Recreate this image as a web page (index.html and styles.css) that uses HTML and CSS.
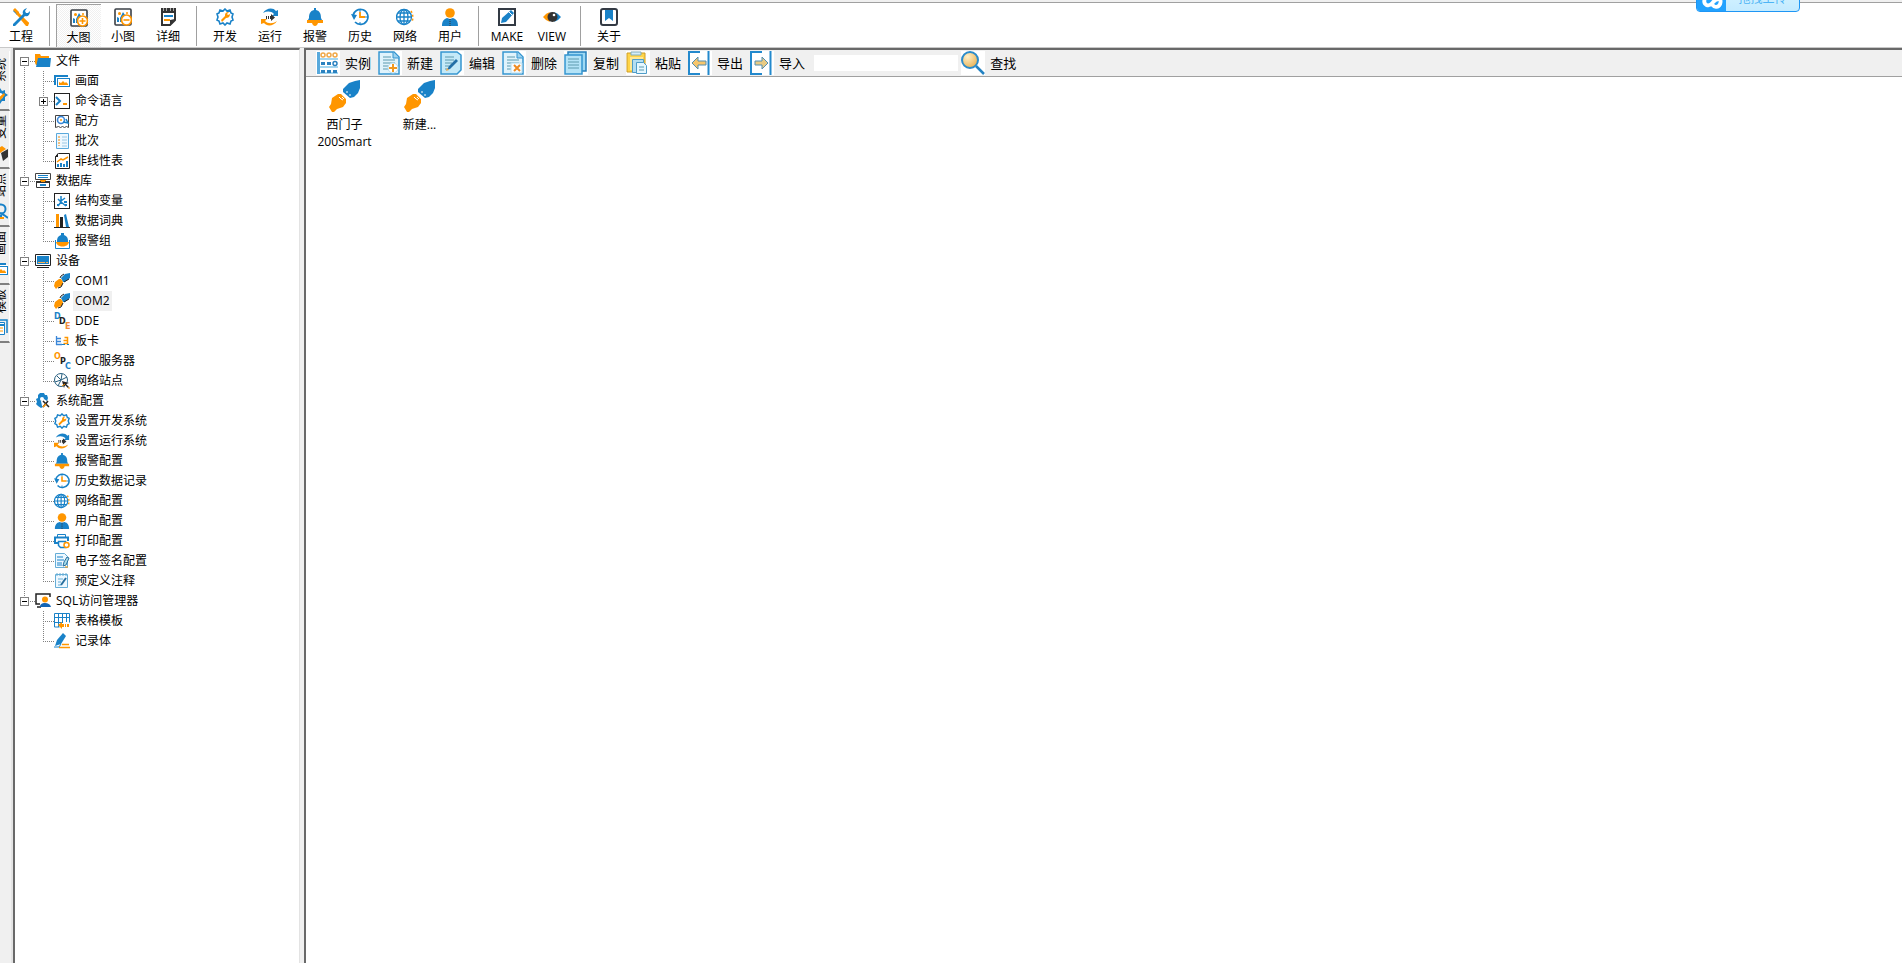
FILE: index.html
```html
<!DOCTYPE html>
<html lang="zh-CN">
<head>
    <meta charset="UTF-8">
    <meta name="viewport" content="width=device-width, initial-scale=1.0">
    <title>工程浏览器</title>
    <link rel="stylesheet" href="styles.css">
</head>
<body>
    <svg class="sprite" aria-hidden="true">
        <!-- shared by the top toolbar and the tree -->
        <symbol id="i-tools" viewBox="0 0 18 18">
            <path d="M3 1l4 4-2 2-4-4z" fill="#1982c8"/><path d="M5 5l11 11" stroke="#ff9600" stroke-width="3"/>
            <path d="M1 2l2-2 4 4v2L5 6z" fill="#ff9600"/><path d="M11 10l6 5-1 3h-2l-5-6z" fill="#ff9600"/>
            <path d="M1 16L11 6c-1-3 1-5 4-6l-2 3 1 2 2 0 2-2c0 4-2 6-5 5L3 18H1z" fill="#1982c8"/>
        </symbol>
        <symbol id="i-zoom" viewBox="0 0 18 18">
            <rect x="1" y="1" width="16" height="16" rx="1" fill="#fff" stroke="#3a3f45" stroke-width="1.6"/>
            <circle cx="5.500" cy="5.500" r="1.500" fill="#ff9600"/><path d="M3 14V9l2 1v4zm3 0v-4l3-6 2 3-2 7z" fill="#1982c8"/><circle cx="13" cy="5" r="1" fill="#ff9600"/>
            <circle cx="12.500" cy="12" r="5" fill="#fff" stroke="#ff9600" stroke-width="1.700"/>
        </symbol>
        <symbol id="i-note" viewBox="0 0 18 18">
            <path d="M3 1h13v11l-5 5H3z" fill="#fff" stroke="#333" stroke-width="2"/><path d="M2 1h15v4H2z" fill="#333"/>
            <path d="M4.500 0v3m3-3v3m4-3v3m3-3v3" stroke="#aaa"/><path d="M5 8h9" stroke="#1982c8" stroke-width="2"/><path d="M5 12h6" stroke="#ff9600" stroke-width="2"/><path d="M16 11l-5 6v-5z" fill="#333"/>
        </symbol>
        <symbol id="i-gear" viewBox="0 0 18 18">
            <path d="M9 1l2 2 3-1 1 3 2 1-1 3 1 3-2 1-1 3-3-1-2 2-2-2-3 1-1-3-2-1 1-3-1-3 2-1 1-3 3 1z" fill="#fff" stroke="#1982c8" stroke-width="1.600"/>
            <path d="M5 12l4-4c0-3 1-4 4-4l-2 2 1 1 2-1c0 3-2 4-4 4l-4 4z" fill="#ff9600"/>
        </symbol>
        <symbol id="i-run" viewBox="0 0 18 18">
            <path d="M2 5C5 0 12-1 15 3l2-1v6h-6l2-2C10 3 6 3 2 5z" fill="#1982c8"/>
            <path d="M16 13C13 18 6 19 3 15l-3 1 0-5h6l-2 2c3 3 8 3 12 0z" fill="#ff9600"/>
            <path d="M5 8h1v3H5zm2 0h1v3H7zm2 0h1V6l4 3.500-4 3.500v-2H9z" fill="#333"/>
        </symbol>
        <symbol id="i-bell" viewBox="0 0 18 18">
            <path d="M8 0h2v2c4 1 5 4 5 8l1 2H2l1-2c0-4 1-7 5-8z" fill="#1982c8"/><path d="M1 12h16v3h-5c-1 4-5 4-6 0H1z" fill="#ff9600"/>
        </symbol>
        <symbol id="i-history" viewBox="0 0 18 18">
            <path d="M2 8a7.500 7.500 0 1 1 2 6" fill="none" stroke="#1982c8" stroke-width="1.700"/><path d="M0 6l6 1-3 5z" fill="#1982c8"/>
            <path d="M9 1v3m0 10v3m5-8h3" stroke="#1982c8"/><path d="M9 4v5h5" fill="none" stroke="#ff9600" stroke-width="1.800"/>
        </symbol>
        <symbol id="i-globe" viewBox="0 0 18 18">
            <g fill="none" stroke="#1982c8" stroke-width="1.300"><circle cx="8" cy="9" r="7.500"/><ellipse cx="8" cy="9" rx="4" ry="7.500"/><path d="M8 1v16M1 9h15M2 5h12M2 13h12"/></g>
            <path d="M15 3q3 5 1 11" fill="none" stroke="#ff9600" stroke-width="1.500" stroke-dasharray="2 2"/>
        </symbol>
        <symbol id="i-user" viewBox="0 0 18 18">
            <circle cx="9" cy="5" r="4.800" fill="#ff9600"/><path d="M1 18c0-5 2-7 5-8l3 1 3-1c3 1 5 3 5 8z" fill="#1982c8"/><path d="M9 11v7" stroke="#333" stroke-dasharray="1 1"/>
        </symbol>
        <symbol id="i-make" viewBox="0 0 18 18">
            <rect x="1" y="1" width="16" height="16" fill="#fff" stroke="#333a44" stroke-width="2"/><path d="M3 15l1-5 9-8 3 3-8 9z" fill="#1982c8"/><path d="M11 4l3 3" stroke="#fff"/>
        </symbol>
        <symbol id="i-view" viewBox="0 0 18 18">
            <path d="M7 4Q3 5 0 9q3 4 7 5l-2-5z" fill="#ff9600"/><path d="M11 4q4 1 7 5-3 4-7 5l3-5z" fill="#1982c8"/>
            <circle cx="9.500" cy="9" r="5" fill="#333"/><circle cx="11" cy="7" r="1.300" fill="#fff"/>
        </symbol>
        <symbol id="i-about" viewBox="0 0 18 18">
            <rect x="1" y="1" width="16" height="16" rx="2" fill="#fff" stroke="#333a44" stroke-width="2"/><path d="M5 2h8v11l-4-3-4 3z" fill="#1982c8"/>
        </symbol>

        <!-- tree only -->
        <symbol id="t-folder" viewBox="0 0 16 16"><path d="M0 1h5l1 2h8v3H3v6H1L0 10z" fill="#ff9600"/><path d="M3 5h13l-1 9H1z" fill="#1982c8"/></symbol>
        <symbol id="t-picture" viewBox="0 0 16 16"><path d="M0 2h14v3H2v7H0z" fill="#1982c8"/><path d="M2 4h14v10H2z" fill="#fff"/><rect x="3.500" y="5.500" width="12" height="8" fill="#fff" stroke="#1982c8"/><path d="M5 12V9l2 1 2-2 2 2 1-1 2 2v1z" fill="#ff9600"/></symbol>
        <symbol id="t-cmd" viewBox="0 0 16 16"><rect x=".5" y=".5" width="15" height="15" fill="#fff" stroke="#222"/><path d="M2 4l4 4-4 4" fill="none" stroke="#1982c8" stroke-width="2"/><path d="M9 11h4" stroke="#ff9600" stroke-width="2"/></symbol>
        <symbol id="t-recipe" viewBox="0 0 16 16"><path d="M1.500 14.500v-12h13v12l-2-1-2 1-2-1-2 1-2-1z" fill="#fff" stroke="#444"/><circle cx="7" cy="7" r="3.500" fill="none" stroke="#3a86d8" stroke-width="1.600"/><path d="M9 9l5 1-2-4" fill="none" stroke="#1982c8" stroke-width="1.500"/><circle cx="7" cy="7" r="1" fill="#ff9600"/></symbol>
        <symbol id="t-batch" viewBox="0 0 16 16"><path d="M2.500.5h12v15h-12z" fill="#eef8ff" stroke="#5aa9dc"/><path d="M5 3v10" stroke="#f0c080" stroke-width="2" stroke-dasharray="2 1"/><path d="M8 4h5M8 7h5M8 10h5M8 13h5" stroke="#9cc8e4"/></symbol>
        <symbol id="t-chart" viewBox="0 0 16 16"><path d="M1.500 3.500l3-3h11v15h-14z" fill="#fff" stroke="#222"/><path d="M1 4l3-4v4z" fill="#222"/><path d="M3 9l4-3 2 1 5-3" fill="none" stroke="#ff9600" stroke-width="1.500"/><path d="M4 14v-3m3 3v-4m3 4v-3m3 3V8" stroke="#1982c8" stroke-width="2"/></symbol>
        <symbol id="t-db" viewBox="0 0 16 16"><path d="M.5.500h15v6H.5z" fill="#fff" stroke="#444"/><path d="M3 2.500h10M3 4.500h10" stroke="#1982c8"/><path d="M5 7h6v2H5z" fill="#ff9600"/><path d="M1.500 9.500h13v5h-13z" fill="#fff" stroke="#333"/><path d="M1 9h5m4 0h5" stroke="#333" stroke-width="2"/><path d="M5 12h6" stroke="#1982c8" stroke-width="2"/></symbol>
        <symbol id="t-struct" viewBox="0 0 16 16"><rect x=".5" y=".5" width="15" height="15" fill="#fff" stroke="#222"/><path d="M7 3v6l-3 4m3-4l5 4M7 8l4-3M4 6l3 3" fill="none" stroke="#1982c8" stroke-width="1.500"/><path d="M10 9h3M3 12h2m6 0h2" stroke="#1982c8" stroke-width="2"/></symbol>
        <symbol id="t-books" viewBox="0 0 16 16"><path d="M2 1h3v13H2z" fill="#ff9600"/><path d="M6 4h3v10H6z" fill="#222"/><path d="M10 2l2-1 3 13h-3z" fill="#1982c8"/><path d="M0 14.500h16" stroke="#222"/></symbol>
        <symbol id="t-bellgroup" viewBox="0 0 16 16"><path d="M1.500 7V15.500h14V7" fill="none" stroke="#1982c8"/><path d="M7 0h3v2c3 1 4 3 4 6v1H3V8c0-3 1-5 4-6z" fill="#1982c8"/><path d="M2 9h13c-1 6-12 6-13 0z" fill="#ff9600"/></symbol>
        <symbol id="t-device" viewBox="0 0 16 16"><path d="M.5 1.500h15v11H.5z" fill="#fff" stroke="#222"/><path d="M2 3h12v8H2z" fill="#1982c8"/><path d="M3 9.500h7m1 0h2" stroke="#ffb050"/><path d="M2 14.500h12" stroke="#222"/></symbol>
        <symbol id="t-plug" viewBox="0 0 32 32"><path d="M14 9l6-6 6-2 5-1v8l-2 5-4 4-4 1-7-6z" fill="#1982c8"/><path d="M3 18l6-4h3l5 5v4l-3 4-6 2-3 3H3l-3-5 2-3z" fill="#ff9600"/><path d="M10 17l2 2m1-2l2 2m-3 0l2 1" stroke="#fff"/><path d="M18 11v2m3 1v2" stroke="#fff"/></symbol>
        <symbol id="t-plugs" viewBox="0 0 16 16"><path d="M7 5l4-4 5-1v5l-5 4-2 0z" fill="#1982c8"/><path d="M0 13l1-4 4-3h2l2 3-1 4-4 1-2 2z" fill="#ff9600"/><path d="M6 5l1-2 3-2M10 9l5-3M9 10l-2 4-3 1" fill="none" stroke="#222"/></symbol>
        <symbol id="t-card" viewBox="0 0 16 16"><path d="M2.500 3v9M3 5.500h4M3 8.500h4m-5 3h6" stroke="#3a86d8" stroke-width="1.300"/><path d="M10.500 4.500h3v3h-4m0 3h4v-3" fill="none" stroke="#ff9600" stroke-width="1.500"/><path d="M8 11.500h3m2 0h2" stroke="#1982c8"/></symbol>
        <symbol id="t-site" viewBox="0 0 16 16"><g fill="none" stroke="#286080"><circle cx="7" cy="7" r="6.500"/><path d="M1 9l6-2 1-6M3 3l4 4 6-3M7 7l-3 6"/></g><path d="M8 8l7 2-3 1 3 3-1 1-3-3-1 3z" fill="#222"/><path d="M8 13l3-2m3 4h2" stroke="#ff9600"/></symbol>
        <symbol id="t-system" viewBox="0 0 16 16"><path d="M5 0h4l1 2h2l1 3-1 3-3-2-3 2 1 5 1 1-2 1-3-2-2-2 1-2-1-3 2-1 0-3z" fill="#1982c8"/><circle cx="7" cy="6" r="2" fill="#fff"/><path d="M8 8l6 6M13 8l-5 6" stroke="#222" stroke-width="1.500"/><path d="M8 14l3-3" stroke="#ff9600" stroke-width="1.500"/></symbol>
        <symbol id="t-print" viewBox="0 0 16 16"><path d="M3.500 1.500h8v3h-8z" fill="#fff" stroke="#1982c8"/><path d="M1 8V4.500h13V8M1 8v2h3" fill="none" stroke="#1982c8" stroke-width="2"/><path d="M4.500 8.500h7v6h-5l-2-2z" fill="#fff" stroke="#1982c8" stroke-width="1.500"/><circle cx="12.500" cy="12" r="2.500" fill="#fff" stroke="#ff9600" stroke-width="1.500"/></symbol>
        <symbol id="t-sign" viewBox="0 0 16 16"><path d="M1.500.5h9l3 3v11h-12z" fill="#eef8ff" stroke="#65add6"/><path d="M3 4h6M3 7h7M3 10h5M3 12h5" stroke="#1982c8"/><path d="M9 13l1-4 3-5 2 1-3 7z" fill="#aaddea" stroke="#286f9e"/><path d="M11 14h3" stroke="#ff9600"/></symbol>
        <symbol id="t-memo" viewBox="0 0 16 16"><path d="M1.500 1.500h12v13h-12z" fill="#eef8ff" stroke="#65add6"/><path d="M3 0v3m3-3v3m3-3v3m3-3v3" stroke="#65add6"/><path d="M4 6h5M4 9h3M4 12h3" stroke="#65add6"/><path d="M7 12l5-7" stroke="#286f9e" stroke-width="2"/></symbol>
        <symbol id="t-sql" viewBox="0 0 16 16"><path d="M5 11H1V1h14v3" fill="none" stroke="#222" stroke-width="1.500"/><path d="M2 14h4" stroke="#222" stroke-width="1.500"/><circle cx="10" cy="6.500" r="3" fill="#ff9600"/><path d="M5 14c0-3 2-4 5-4s5 1 6 4z" fill="#1464b4"/></symbol>
        <symbol id="t-table" viewBox="0 0 16 16"><path d="M.5 9.500v-9h15v9M.5 9v5h5M0 4.500h16M0 9.500h9M4.500 1v13M8.500 1v9M12.500 1v8" fill="none" stroke="#1982c8"/><path d="M4 12l4-3v2h2v3H8v2zm7-1h1v3h-1zm2 0h2v3h-2z" fill="#ff9600"/></symbol>
        <symbol id="t-record" viewBox="0 0 16 16"><path d="M1 13l2-6 6-7 3 3-5 8z" fill="#1982c8"/><path d="M0 14h5l2-3" fill="none" stroke="#1982c8"/><path d="M8 11.500h7M5 14.500h11" stroke="#ff9600" stroke-width="1.500"/></symbol>

        <!-- panel toolbar -->
        <symbol id="p-case" viewBox="0 0 24 24"><path d="M1 1h3v22H1z" fill="#58a9dc"/><path d="M4 8h18M4 16h18M4 22h18" stroke="#a4d6f0" stroke-width="2"/><g fill="none" stroke="#f0a848" stroke-width="1.500"><circle cx="7" cy="4" r="2"/><circle cx="13" cy="4" r="2"/><circle cx="19" cy="4" r="2"/></g><path d="M5 11h4v3H5zm6 0h4v3h-4zM5 19h4v3H5zm6 0h4v3h-4zm6 0h4v3h-4z" fill="#2b82c0"/><circle cx="19" cy="12.500" r="2" fill="none" stroke="#2b82c0" stroke-width="1.500"/></symbol>
        <symbol id="p-doc" viewBox="0 0 24 24"><path d="M1 1h15l5 5v17H1z" fill="#e0f3fc" stroke="#3595d0" stroke-width="1.500"/><path d="M15 1v6h6" fill="#9ed3ef" stroke="#3595d0"/><path d="M5 6h8M5 9h12M5 12h12M5 15h8M5 18h6" stroke="#5c9aae"/></symbol>
        <symbol id="p-new" viewBox="0 0 24 24"><use href="#p-doc"/><circle cx="15" cy="17" r="5" fill="#fff" stroke="#b8dced"/><path d="M15 13v8m-4-4h8" stroke="#f09820" stroke-width="2"/></symbol>
        <symbol id="p-edit" viewBox="0 0 24 24"><path d="M1 1h16l4 3v15l-4 4H1z" fill="#c4e9f8" stroke="#3595d0" stroke-width="1.500"/><path d="M5 6h9M5 9h9M5 12h7M5 15h4M5 18h3" stroke="#5c9aae"/><path d="M7 19l2-4 7-7 2 2-8 8z" fill="#246fa6"/><path d="M6 20l1-3 2 2z" fill="#f0a848"/></symbol>
        <symbol id="p-delete" viewBox="0 0 24 24"><use href="#p-doc"/><path d="M9 12h11v10H9z" fill="#f7fcff" stroke="#b8dced"/><path d="M12 14l6 6m0-6l-6 6" stroke="#f08a20" stroke-width="2"/></symbol>
        <symbol id="p-copy" viewBox="0 0 24 24"><path d="M4 1h18v19H4z" fill="#9ed9f4" stroke="#277fba" stroke-width="1.500"/><path d="M1 4h17v19H1z" fill="#b4e3f7" stroke="#3595d0" stroke-width="1.500"/><path d="M4 8h11M4 11h11M4 14h11M4 17h11" stroke="#5c9aae"/></symbol>
        <symbol id="p-paste" viewBox="0 0 24 24"><path d="M1 2h18v19H1z" fill="#ffd447" stroke="#ce9e29"/><path d="M5 1h10v3H5z" fill="#d4edf8" stroke="#82aebb"/><path d="M4 6h13v13H4z" fill="#ffe893"/><path d="M6.500 8.500h11v13h-11z" fill="#b4def2" stroke="#509dc8"/><path d="M10.500 11.500h7l3 3v8h-10z" fill="#e5f7ff" stroke="#509dc8"/><path d="M13 16h5m-5 3h5" stroke="#5c9aae"/></symbol>
        <symbol id="p-export" viewBox="0 0 24 24"><path d="M12 1H1v22h11M20.500 0v24" fill="none" stroke="#2389cd" stroke-width="2"/><path d="M4 12l6-6v4h8v4h-8v4z" fill="#f7c66c" stroke="#538eb0"/></symbol>
        <symbol id="p-import" viewBox="0 0 24 24"><path d="M12 1H1v22h11M20.500 0v24" fill="none" stroke="#2389cd" stroke-width="2"/><path d="M18 12l-6-6v4H5v4h7v4z" fill="#e8cb84" stroke="#538eb0"/></symbol>
        <symbol id="p-find" viewBox="0 0 24 24"><radialGradient id="lens" cx=".35" cy=".3" r=".7"><stop stop-color="#fff0c8"/><stop offset="1" stop-color="#e8b55c"/></radialGradient><path d="M15 15l8 8" stroke="#2382c2" stroke-width="2.500"/><circle cx="9" cy="9" r="8" fill="url(#lens)" stroke="#2b8ccb" stroke-width="2"/></symbol>
    </svg>

    <header class="toolbar">
        <button class="tool tool-first"><svg><use href="#i-tools"/></svg>工程</button>
        <span class="sep"></span>
        <button class="tool active"><svg viewBox="0 0 18 18"><use href="#i-zoom"/><path d="M9.500 12h6m-3-3v6" stroke="#ff9600" stroke-width="1.600"/></svg>大图</button>
        <button class="tool"><svg viewBox="0 0 18 18"><use href="#i-zoom"/><path d="M9.500 12h6" stroke="#ff9600" stroke-width="1.600"/></svg>小图</button>
        <button class="tool"><svg><use href="#i-note"/></svg>详细</button>
        <span class="sep"></span>
        <button class="tool"><svg><use href="#i-gear"/></svg>开发</button>
        <button class="tool"><svg><use href="#i-run"/></svg>运行</button>
        <button class="tool"><svg><use href="#i-bell"/></svg>报警</button>
        <button class="tool"><svg><use href="#i-history"/></svg>历史</button>
        <button class="tool"><svg><use href="#i-globe"/></svg>网络</button>
        <button class="tool"><svg><use href="#i-user"/></svg>用户</button>
        <span class="sep"></span>
        <button class="tool"><svg><use href="#i-make"/></svg>MAKE</button>
        <button class="tool"><svg><use href="#i-view"/></svg>VIEW</button>
        <span class="sep"></span>
        <button class="tool"><svg><use href="#i-about"/></svg>关于</button>
    </header>

    <div class="workspace">
        <nav class="tabs">
            <button class="tab current"><span>系统</span><svg viewBox="0 0 16 16"><path d="M8 0l2 3 3-1 0 3 3 2-3 2 0 4-3 0-2 3-2-3-3 0 0-4-3-2 3-2 0-3 3 1z" fill="#1982c8"/><circle cx="8" cy="8" r="3" fill="#fff"/><path d="M5 11l7-6 1 2-6 7z" fill="#ff9600"/></svg></button>
            <button class="tab"><span>变量</span><svg viewBox="0 0 16 16"><path d="M3 5l7-4 4 3-6 4z" fill="#ff9600"/><path d="M9 8l7-4v8l-5 4z" fill="#333"/></svg></button>
            <button class="tab"><span>站点</span><svg viewBox="0 0 16 16"><circle cx="9" cy="6" r="4.500" fill="none" stroke="#1982c8" stroke-width="2"/><path d="M8 10l4 2 4 3M4 13h6" stroke="#1982c8" stroke-width="2"/><path d="M8 15h4" stroke="#ff9600" stroke-width="2"/></svg></button>
            <button class="tab"><span>画面</span><svg><use href="#t-picture"/></svg></button>
            <button class="tab"><span>模板</span><svg viewBox="0 0 16 16"><path d="M4 1h11v13" fill="none" stroke="#1982c8" stroke-width="1.500"/><path d="M1.500 3.500h11v12h-11z" fill="#fff" stroke="#1982c8"/><path d="M2 6h10" stroke="#1982c8" stroke-width="2"/><path d="M4 9h7m-7 3h7" stroke="#ff9600"/></svg></button>
        </nav>

        <aside class="tree">
            <ul>
                <li class="group">
                    <div class="row"><i class="guide root start"><button class="toggle" aria-label="折叠"></button></i><svg><use href="#t-folder"/></svg><span>文件</span></div>
                    <ul>
                        <li class="row"><i class="guide trunk"></i><i class="guide branch"></i><svg><use href="#t-picture"/></svg><span>画面</span></li>
                        <li class="row"><i class="guide trunk"></i><i class="guide branch"><button class="toggle closed" aria-label="展开"></button></i><svg><use href="#t-cmd"/></svg><span>命令语言</span></li>
                        <li class="row"><i class="guide trunk"></i><i class="guide branch"></i><svg><use href="#t-recipe"/></svg><span>配方</span></li>
                        <li class="row"><i class="guide trunk"></i><i class="guide branch"></i><svg><use href="#t-batch"/></svg><span>批次</span></li>
                        <li class="row"><i class="guide trunk"></i><i class="guide branch"></i><svg><use href="#t-chart"/></svg><span>非线性表</span></li>
                    </ul>
                </li>
                <li class="group">
                    <div class="row"><i class="guide root"><button class="toggle" aria-label="折叠"></button></i><svg><use href="#t-db"/></svg><span>数据库</span></div>
                    <ul>
                        <li class="row"><i class="guide trunk"></i><i class="guide branch"></i><svg><use href="#t-struct"/></svg><span>结构变量</span></li>
                        <li class="row"><i class="guide trunk"></i><i class="guide branch"></i><svg><use href="#t-books"/></svg><span>数据词典</span></li>
                        <li class="row"><i class="guide trunk"></i><i class="guide branch"></i><svg><use href="#t-bellgroup"/></svg><span>报警组</span></li>
                    </ul>
                </li>
                <li class="group">
                    <div class="row"><i class="guide root"><button class="toggle" aria-label="折叠"></button></i><svg><use href="#t-device"/></svg><span>设备</span></div>
                    <ul>
                        <li class="row"><i class="guide trunk"></i><i class="guide branch"></i><svg><use href="#t-plugs"/></svg><span>COM1</span></li>
                        <li class="row"><i class="guide trunk"></i><i class="guide branch"></i><svg><use href="#t-plugs"/></svg><span class="selected">COM2</span></li>
                        <li class="row"><i class="guide trunk"></i><i class="guide branch"></i><svg class="letters" viewBox="0 0 16 16"><text x="0" y="6" fill="#1982c8">D</text><text x="5" y="11" fill="#222">D</text><text x="11" y="16" fill="#f08c3c">E</text></svg><span>DDE</span></li>
                        <li class="row"><i class="guide trunk"></i><i class="guide branch"></i><svg><use href="#t-card"/></svg><span>板卡</span></li>
                        <li class="row"><i class="guide trunk"></i><i class="guide branch"></i><svg class="letters" viewBox="0 0 16 16"><text x="0" y="6" fill="#ff9600">O</text><text x="6" y="11" fill="#222">P</text><text x="11" y="16" fill="#1982c8">C</text></svg><span>OPC服务器</span></li>
                        <li class="row"><i class="guide trunk"></i><i class="guide branch"></i><svg><use href="#t-site"/></svg><span>网络站点</span></li>
                    </ul>
                </li>
                <li class="group">
                    <div class="row"><i class="guide root"><button class="toggle" aria-label="折叠"></button></i><svg><use href="#t-system"/></svg><span>系统配置</span></div>
                    <ul>
                        <li class="row"><i class="guide trunk"></i><i class="guide branch"></i><svg><use href="#i-gear"/></svg><span>设置开发系统</span></li>
                        <li class="row"><i class="guide trunk"></i><i class="guide branch"></i><svg><use href="#i-run"/></svg><span>设置运行系统</span></li>
                        <li class="row"><i class="guide trunk"></i><i class="guide branch"></i><svg><use href="#i-bell"/></svg><span>报警配置</span></li>
                        <li class="row"><i class="guide trunk"></i><i class="guide branch"></i><svg><use href="#i-history"/></svg><span>历史数据记录</span></li>
                        <li class="row"><i class="guide trunk"></i><i class="guide branch"></i><svg><use href="#i-globe"/></svg><span>网络配置</span></li>
                        <li class="row"><i class="guide trunk"></i><i class="guide branch"></i><svg><use href="#i-user"/></svg><span>用户配置</span></li>
                        <li class="row"><i class="guide trunk"></i><i class="guide branch"></i><svg><use href="#t-print"/></svg><span>打印配置</span></li>
                        <li class="row"><i class="guide trunk"></i><i class="guide branch"></i><svg><use href="#t-sign"/></svg><span>电子签名配置</span></li>
                        <li class="row"><i class="guide trunk"></i><i class="guide branch"></i><svg><use href="#t-memo"/></svg><span>预定义注释</span></li>
                    </ul>
                </li>
                <li class="group">
                    <div class="row"><i class="guide root end"><button class="toggle" aria-label="折叠"></button></i><svg><use href="#t-sql"/></svg><span>SQL访问管理器</span></div>
                    <ul>
                        <li class="row"><i class="guide"></i><i class="guide branch"></i><svg><use href="#t-table"/></svg><span>表格模板</span></li>
                        <li class="row"><i class="guide"></i><i class="guide branch"></i><svg><use href="#t-record"/></svg><span>记录体</span></li>
                    </ul>
                </li>
            </ul>
        </aside>

        <main class="panel">
            <div class="actions">
                <button class="action"><svg><use href="#p-case"/></svg>实例</button>
                <button class="action"><svg><use href="#p-new"/></svg>新建</button>
                <button class="action"><svg><use href="#p-edit"/></svg>编辑</button>
                <button class="action"><svg><use href="#p-delete"/></svg>删除</button>
                <button class="action"><svg><use href="#p-copy"/></svg>复制</button>
                <button class="action"><svg><use href="#p-paste"/></svg>粘贴</button>
                <button class="action"><svg><use href="#p-export"/></svg>导出</button>
                <button class="action"><svg><use href="#p-import"/></svg>导入</button>
                <input class="search" type="text" aria-label="查找">
                <button class="action"><svg><use href="#p-find"/></svg>查找</button>
            </div>
            <div class="devices">
                <a class="device" href="#"><svg><use href="#t-plug"/></svg>西门子<br>200Smart</a>
                <a class="device" href="#"><svg><use href="#t-plug"/></svg>新建...</a>
            </div>
        </main>
    </div>

    <button class="upload">
        <svg viewBox="0 0 30 24"><path d="M20 12c-2-4-8-4-12 0-2 6 4 9 8 4s10-6 8 1c-2 4-6 4-8 1" fill="none" stroke="#fff" stroke-width="4"/></svg>
        <span>拖拽上传</span>
    </button>
</body>
</html>
```
FILE: styles.css
```css
* {
    box-sizing: border-box;
}

body {
    margin: 0;
    height: 100vh;
    display: flex;
    flex-direction: column;
    overflow: hidden;
    background: #f0f0f0;
    color: #000;
    font: 12px/16px "Open Sans", "Noto Sans CJK SC", sans-serif;
}

button {
    margin: 0;
    padding: 0;
    border: 0;
    background: none;
    color: inherit;
    font: inherit;
}

ul {
    margin: 0;
    padding: 0;
    list-style: none;
}

svg {
    display: block;
    flex: none;
}

.sprite {
    position: absolute;
    width: 0;
    height: 0;
}

/* top toolbar */
.toolbar {
    display: flex;
    flex: none;
    height: 46px;
    margin-top: 2px;
    padding-top: 1px;
    background: #fff;
    border-top: 1px solid #a0a0a0;
    border-bottom: 1px solid #c8c8c8;
}

.tool {
    display: flex;
    flex-direction: column;
    align-items: center;
    width: 45px;
    padding: 4px 1px 0 0;
    gap: 3px;
    white-space: nowrap;
}

.tool-first {
    width: 44px;
    padding-right: 2px;
}

.tool svg {
    width: 18px;
    height: 18px;
}

.tool.active {
    background: repeating-conic-gradient(#fff 0 25%, #f0f0f0 0 50%) 0 0 / 2px 2px;
    border-left: 1px solid #a0a0a0;
    border-top: 1px solid #a0a0a0;
}

.sep {
    width: 1px;
    height: 40px;
    margin: 2px 6px 0 5px;
    background: #a0a0a0;
}

/* layout */
.workspace {
    display: flex;
    flex: 1;
    min-height: 0;
}

.tabs {
    flex: none;
    width: 13px;
    padding-top: 3px;
    overflow: hidden;
    border-right: 2px solid #e3e3e3;
}

.tab {
    display: flex;
    flex-direction: column;
    align-items: flex-end;
    gap: 6px;
    width: 10px;
    height: 58px;
    padding: 4px 1px 0 0;
    border-right: 1px solid #fff;
    border-bottom: 2px solid #808080;
}

.tab.current {
    height: 60px;
    padding-top: 7px;
}

.tab span {
    writing-mode: vertical-rl;
    text-orientation: sideways;
    transform: rotate(180deg);
    line-height: 14px;
}

.tab svg {
    width: 16px;
    height: 16px;
}

/* project tree */
.tree {
    flex: none;
    width: 287px;
    padding-top: 1px;
    background: #fff;
    border-left: 2px solid #696969;
    border-top: 2px solid #696969;
    border-right: 1px solid #e3e3e3;
    overflow: hidden;
}

.row {
    display: flex;
    align-items: center;
    height: 20px;
    white-space: nowrap;
}

.row svg {
    width: 16px;
    height: 16px;
}

.row .letters {
    overflow: visible;
    font: bold 8px/8px "DejaVu Sans", sans-serif;
}

.row span {
    margin-left: 3px;
    padding: 2px;
}

.row .selected {
    background: #f0f0f0;
}

.guide {
    --down: repeating-linear-gradient(#808080 0 1px, transparent 1px 2px);
    --across: repeating-linear-gradient(90deg, #808080 0 1px, transparent 1px 2px);
    display: flex;
    align-items: center;
    flex: none;
    width: 20px;
    height: 20px;
    padding-left: 5px;
    background-repeat: no-repeat;
}

.trunk {
    background-image: var(--down);
    background-position: 9px 0;
    background-size: 1px 20px;
}

.root,
.branch {
    background-image: var(--down), var(--across);
    background-position: 9px 0, 9px 10px;
    background-size: 1px 20px, 11px 1px;
}

.branch {
    width: 19px;
    padding-left: 4px;
    background-position: 8px 0, 8px 10px;
}

.root.start {
    background-position: 9px 10px, 9px 10px;
}

.root.end,
.row:last-child .branch {
    background-size: 1px 10px, 11px 1px;
}

.toggle {
    width: 9px;
    height: 9px;
    border: 1px solid #808080;
    background: linear-gradient(#000, #000) center / 5px 1px no-repeat, #fff;
}

.toggle.closed {
    background: linear-gradient(#000, #000) center / 5px 1px no-repeat, linear-gradient(#000, #000) center / 1px 5px no-repeat, #fff;
}

/* content panel */
.panel {
    flex: 1;
    min-width: 0;
    margin-left: 4px;
    background: #fff;
    border-left: 2px solid #696969;
    border-top: 2px solid #696969;
}

.actions {
    display: flex;
    align-items: center;
    height: 27px;
    padding: 0 0 1px 10px;
    background: #f0f0f0;
    border-bottom: 1px solid #a0a0a0;
    font-size: 13px;
}

.action {
    display: flex;
    align-items: center;
    gap: 5px;
    margin-right: 7px;
    white-space: nowrap;
}

.action svg {
    width: 24px;
    height: 24px;
    background: #fff;
}

.search {
    width: 144px;
    height: 16px;
    margin: 0 3px 0 2px;
    padding: 0 2px;
    border: 0;
    background: #fff;
    font: inherit;
}

.devices {
    display: flex;
    padding: 3px 1px;
}

.device {
    width: 75px;
    color: inherit;
    line-height: 17px;
    text-align: center;
    text-decoration: none;
}

.device svg {
    width: 32px;
    height: 32px;
    margin: 0 auto 4px;
}

/* upload badge hangs over the top edge of the window */
.upload {
    position: absolute;
    top: -14px;
    right: 102px;
    display: flex;
    align-items: center;
    width: 104px;
    height: 26px;
    overflow: hidden;
    background: linear-gradient(#d8f4ff, #c4ebff);
    border: 1px solid #1e96f5;
    border-radius: 4px;
    color: #4db4f5;
}

.upload svg {
    width: 29px;
    height: 24px;
    background: #22a2ff;
}

.upload span {
    flex: 1;
}
```
